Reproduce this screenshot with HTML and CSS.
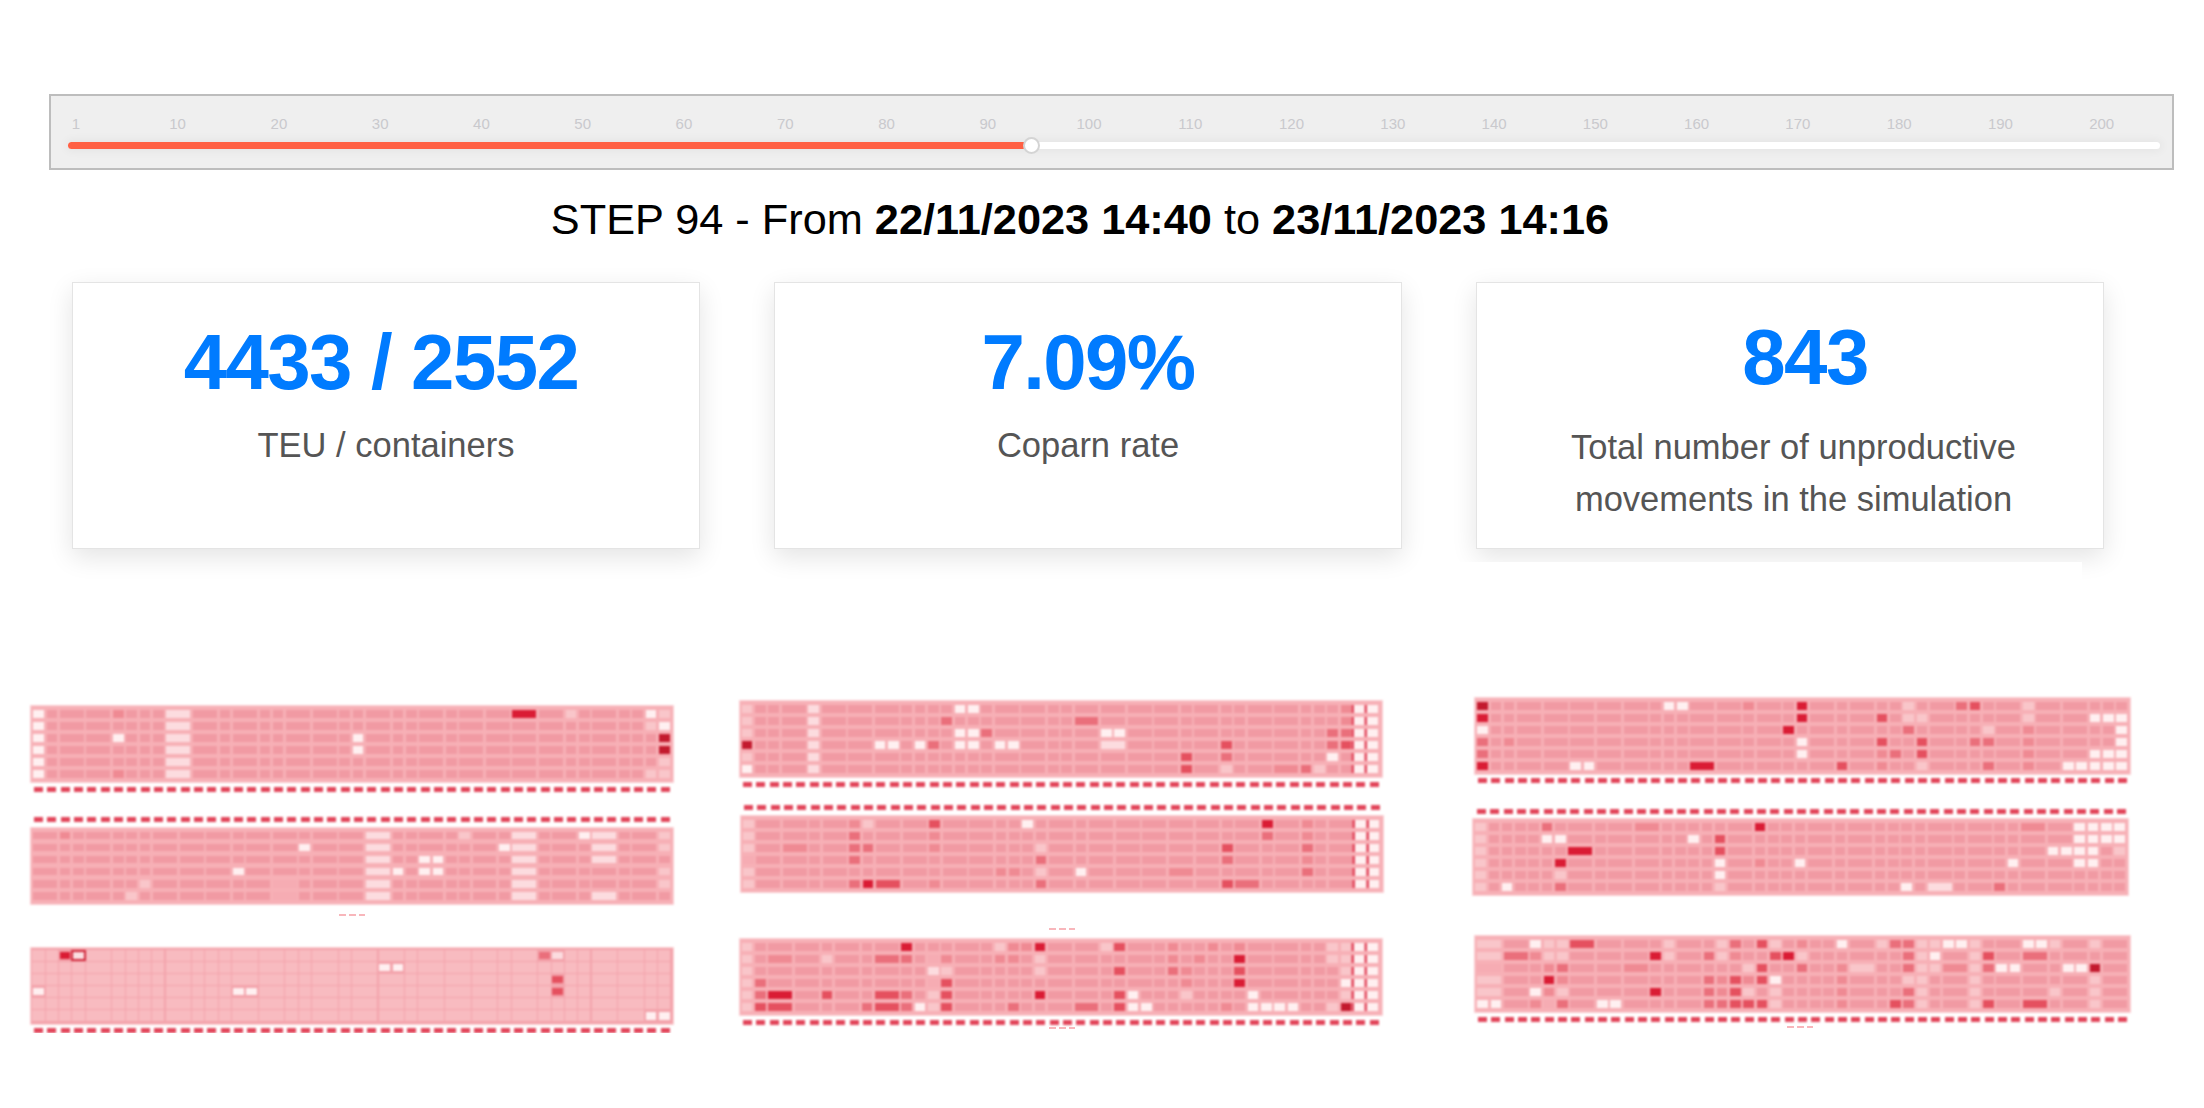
FILE: index.html
```html
<!DOCTYPE html>
<html>
<head>
    <title>Yard simulation</title>
    <meta charset="utf-8">
    <link rel="stylesheet" href="styles.css">
</head>

<body>
    <div class="slider">
        <div class="ticks">
            <span class="tick tick-first">1</span>
            <span class="tick">10</span><span class="tick">20</span><span class="tick">30</span><span class="tick">40</span>
            <span class="tick">50</span><span class="tick">60</span><span class="tick">70</span><span class="tick">80</span>
            <span class="tick">90</span><span class="tick">100</span><span class="tick">110</span><span class="tick">120</span>
            <span class="tick">130</span><span class="tick">140</span><span class="tick">150</span><span class="tick">160</span>
            <span class="tick">170</span><span class="tick">180</span><span class="tick">190</span><span class="tick">200</span>
        </div>
        <div class="track">
            <div class="track-fill"></div>
            <div class="thumb"></div>
        </div>
    </div>

    <h1 class="step">STEP 94 - From <b>22/11/2023 14:40</b> to <b>23/11/2023 14:16</b></h1>

    <div class="cards">
        <div class="card">
            <div class="card-value value-left">4433 / 2552</div>
            <div class="card-label">TEU / containers</div>
        </div>
        <div class="card">
            <div class="card-value">7.09%</div>
            <div class="card-label">Coparn rate</div>
        </div>
        <div class="card card-tall">
            <div class="card-value value-right">843</div>
            <div class="card-label">Total number of unproductive<br>movements in the simulation</div>
            <div class="card-patch"></div>
        </div>
    </div>

    <div class="yards">
        <div class="yard yard-1">
            <div class="map m1a" data-map="1a"></div>
            <div class="strip s1"></div>
            <div class="strip s2"></div>
            <div class="map m1b" data-map="1b"></div>
            <div class="speck sp1"></div>
            <div class="map m1c map-pale" data-map="1c"></div>
            <div class="strip s1"></div>
        </div>
        <div class="yard yard-2">
            <div class="map m2a" data-map="2a"></div>
            <div class="strip s1"></div>
            <div class="strip s3"></div>
            <div class="map m2b" data-map="2b"></div>
            <div class="speck sp2"></div>
            <div class="map m2c" data-map="2c"></div>
            <div class="strip s1"></div>
            <div class="speck sp3"></div>
        </div>
        <div class="yard yard-3">
            <div class="map map-wide m3a" data-map="3a"></div>
            <div class="strip strip-wide s4"></div>
            <div class="strip strip-wide s5"></div>
            <div class="map map-wide m3b" data-map="3b"></div>
            <div class="map map-wide m3c" data-map="3c"></div>
            <div class="strip strip-wide s1"></div>
            <div class="speck sp4"></div>
        </div>
    </div>

    <script src="maps.js"></script>
</body>

</html>
```

FILE: styles.css
```css
body {
    margin: 0;
    padding: 94px 0 0 49px;
    font-family: "Liberation Sans", Arial, sans-serif;
    background-color: #fff;
    overflow: hidden;
}

/* slider */
.slider {
    width: 2121px;
    height: 72px;
    border: 2px solid #bdbdbd;
    background-color: #efefef;
}

.ticks {
    display: flex;
    padding-top: 19px;
    height: 18px;
}

.tick {
    width: 101.27px;
    flex: none;
    text-align: center;
    font-size: 15px;
    line-height: 18px;
    color: #c9c9cd;
}

.tick-first {
    width: 50px;
    margin-right: 26px;
}

.track {
    position: relative;
    margin: 9px 0 0 17px;
    width: 2092px;
    height: 7px;
    border-radius: 4px;
    background-color: #fff;
    box-shadow: 0 0 8px 3px rgba(0, 0, 0, 0.04);
}

.track-fill {
    width: 963px;
    height: 7px;
    border-radius: 4px 0 0 4px;
    background-color: #ff6044;
}

.thumb {
    position: absolute;
    left: 955px;
    top: -5px;
    width: 13px;
    height: 13px;
    border: 2px solid #d4d4d4;
    border-radius: 50%;
    background-color: #fff;
}

/* title */
.step {
    margin: 24px 0 0 0;
    width: 2062px;
    text-align: center;
    font-size: 43.3px;
    line-height: 50px;
    font-weight: normal;
    color: #000;
}

.step b {
    font-weight: bold;
}

/* kpi cards */
.cards {
    display: flex;
    gap: 74px;
    margin: 38px 0 0 23px;
}

.card {
    position: relative;
    box-sizing: border-box;
    width: 628px;
    height: 267px;
    padding-top: 37px;
    text-align: center;
    background-color: #fff;
    border: 1px solid #e4e4e4;
    box-shadow: 0 8px 24px rgba(0, 0, 0, 0.11);
}

.card-value {
    font-size: 78px;
    line-height: 84px;
    font-weight: bold;
    letter-spacing: -1.6px;
    color: #007bff;
}

.value-left {
    padding-right: 10px;
}

.value-right {
    padding-left: 30px;
}

.card-label {
    margin-top: 14.5px;
    font-size: 34.5px;
    line-height: 52px;
    color: #555;
}

.card-tall {
    padding-top: 32px;
}

.card-tall .card-label {
    margin-top: 22px;
    padding-left: 7px;
}

.card-patch {
    position: absolute;
    left: -50px;
    top: 279px;
    width: 655px;
    height: 30px;
    background-color: #fff;
}

/* yard maps */
.yards {
    display: flex;
    margin: 141px 0 0 -18px;
}

.yard {
    flex: none;
    display: flex;
    flex-direction: column;
    width: 642px;
}

.yard-2 {
    margin-left: 66.5px;
}

.yard-3 {
    margin-left: 93.5px;
    width: 655px;
}

.map {
    box-sizing: border-box;
    display: grid;
    grid-template-columns: repeat(48, 10.67px);
    grid-template-rows: repeat(6, 7.7px);
    gap: 4.4px 2.67px;
    width: 642px;
    height: 76px;
    padding: 4px 0 0 2.2px;
    background-color: #f7b0b6;
    outline: 1px solid #fbd3d6;
    filter: blur(1px);
}

.map-wide {
    grid-template-columns: repeat(49, 10.67px);
    width: 655px;
}

.map-pale {
    background-color: #f3a3ab;
}

.cell {
    background-color: #f19aa3;
}

.cell-pair {
    grid-column: span 2;
}

.map-pale .cell-n {
    margin: -1.5px -0.8px;
    background-color: #f8bbc0;
}

.cell-l { background-color: #f6acb3; }
.cell-p { background-color: #f9c6ca; }
.cell-v { background-color: #fcdcdf; }
.cell-w { background-color: #fff0f1; }
.cell-m { background-color: #ef8a93; }
.cell-x { background-color: #ea6f7b; }
.cell-r { background-color: #e5505f; }
.cell-d { background-color: #da1c34; }
.cell-D { background-color: #c31a2e; }

.cell-k {
    background-color: #fff0f1;
    box-shadow: -2.5px 0 0 #e2455a;
}

.cell-o {
    background-color: #fbdfe1;
    box-shadow: 0 0 0 2px #cf2438;
}

.strip {
    flex: none;
    width: 640px;
    height: 5px;
    background: repeating-linear-gradient(90deg, #e2455a 0, #e2455a 9px, transparent 9px, transparent 13.33px);
    filter: blur(0.9px);
}

.strip-wide {
    width: 653px;
}

.speck {
    flex: none;
    width: 26px;
    height: 2px;
    background: repeating-linear-gradient(90deg, #f8b6bb 0, #f8b6bb 7px, transparent 7px, transparent 10px);
}

.m1a { margin-top: 16px; }
.m1b { margin-top: 5.5px; }
.m1c { margin-top: 32px; }
.m2a { margin-top: 11px; }
.m2b { margin: 6px 0 0 1.2px; }
.m2c { margin-top: 9px; }
.m3a { margin-top: 8px; }
.m3b { margin: 5.5px 0 0 -2px; }
.m3c { margin-top: 41px; }

.s1 { margin: 4.5px 0 0 3px; }
.s2 { margin: 25.5px 0 0 3px; }
.s3 { margin: 18.5px 0 0 4.5px; }
.s4 { margin: 3.5px 0 0 3px; }
.s5 { margin: 26px 0 0 1.5px; }

.sp1 { margin: 10px 0 0 308px; }
.sp2 { margin: 36px 0 0 309px; }
.sp3 { margin: 2.5px 0 0 309px; }
.sp4 { margin: 4.5px 0 0 312px; }
```

FILE: maps.js
```js
// r = rows, c = column: "w012345:5" paints column 5 white on every row
var MAPS = {
    '1a': {
        cols: 48,
        pairs: [2, 4, 10, 12, 15, 19, 21, 25, 29, 32, 34, 36, 38, 42],
        marks: 'w012345:0 m05:6 w2:6 v012345:10 w23:24 d0:36 p0:40 w0:46 p15:46 p045:47 w1:47 D23:47'
    },
    '1b': {
        cols: 48,
        pairs: [0, 4, 9, 11, 13, 16, 18, 21, 23, 25, 29, 33, 36, 39, 42, 45],
        marks: 'm0:2 v012345:25 v012345:36 w1:20 w1:35 w0:41 v0125:42 p0:32 w23:29 w23:30 w3:27 w3:15 p4:8 p5:7 p0134:47 l45:18'
    },
    '1c': {
        cols: 48,
        pairs: [4, 10, 15, 17, 21, 24, 26, 29, 31, 33, 36, 42, 44],
        marks: 'd0:2 o0:3 x0:38 v0:39 w1:26 w1:27 r23:39 w3:0 w3:15 w3:16 w5:46 w5:47'
    },
    '2a': {
        cols: 48,
        pairs: [3, 6, 8, 10, 19, 21, 25, 27, 29, 31, 34, 38, 40],
        marks: 'p0124:0 D3:0 w5:0 v012345:5 w0:16 w0:17 x1:15 x1:25 x2:18 w23:16 w23:17 w2:27 w2:28 v3:27 w3:10 w3:11 w3:13 x3:14 w3:19 w3:20 ' +
            'r3:36 x4:36 p5:36 r45:33 w4:44 m5:40 x5:42 p5:43 x23:44 m01:45 x2:45 r3:45 k012345:46 k012345:47'
    },
    '2b': {
        cols: 48,
        pairs: [1, 3, 6, 10, 12, 15, 17, 23, 26, 28, 30, 32, 34, 37, 40, 44],
        marks: 'p01245:0 l3:0 m0:8 x123:8 x5:8 x2:9 d5:9 p0:9 m2:3 r5:10 r0:14 m12:14 m5:14 w0:21 p24:22 x35:22 w4:25 m4:19 m4:20 ' +
            'r25:36 x3:36 x5:37 d0:39 x1:39 m013:42 x24:42 m4:32 k012345:46 k012345:47'
    },
    '2c': {
        cols: 48,
        pairs: [2, 4, 7, 10, 16, 23, 25, 29, 38, 40],
        marks: 'p012345:0 x34:1 r5:1 m1:2 d4:2 r5:2 p1:6 r4:6 x5:9 x1:10 r45:10 d0:12 x145:12 w5:13 v2:14 l13:14 p45:14 ' +
            'm1:15 p2:15 r345:15 p0:19 m1:19 m01:20 x5:20 m0:21 d04:22 p12:22 x5:25 p0:27 r0245:28 w45:29 n4:30 w5:30 ' +
            'm01:32 x2:32 m23:33 p4:33 m1:34 m0:35 m0:37 d13:37 r2:37 m5:36 w4:38 n4:39 w5:38 w5:39 w5:40 w5:41 ' +
            'p015:44 p0124:45 w3:45 D5:45 k012345:46 k012345:47'
    },
    '3a': {
        cols: 49,
        pairs: [3, 5, 7, 9, 11, 16, 18, 21, 25, 28, 34, 39, 42, 44],
        marks: 'D0:0 d15:0 w2:0 x34:0 m3:2 w0:14 w0:15 m0:20 d2:23 d01:24 w34:24 w5:7 w5:8 d5:16 r5:27 r13:30 m45:30 x4:31 ' +
            'p01:32 x2:32 p15:33 r34:33 x0:36 r0:37 x3:37 p2:38 x35:38 p01:41 m2345:41 w5:44 w5:45 w145:46 w145:47 w12345:48'
    },
    '3b': {
        cols: 49,
        pairs: [7, 10, 12, 19, 25, 28, 34, 37, 41, 43],
        marks: 'p012345:0 x0:5 w1:5 w1:6 d3:6 p4:6 x5:6 w5:2 d2:7 m0:12 w1:16 r12:18 w34:18 p5:18 d0:21 m3:21 w3:24 w5:32 v5:34 ' +
            'x5:39 w3:40 m0:41 w01:45 w01:46 w01:47 w01:48 w2:43 w2:44 w23:45 w23:46 p2:47 p2:48 n2:47'
    },
    '3c': {
        cols: 49,
        pairs: [0, 2, 7, 9, 11, 15, 28, 35, 39, 41, 44, 47],
        marks: 'p0134:0 l2:0 w5:0 w5:1 x1:2 w04:4 m1:4 m5:4 p01:5 m2:5 d3:5 m4:5 l5:5 p014:6 x25:6 m3:6 r0:7 w5:9 w5:10 m2:11 d14:13 p01:14 ' +
            'x1:17 x345:17 p01:18 m3:18 m4:18 x5:18 x0:19 m1:19 r345:19 p24:20 m3:20 r5:20 r0235:21 p0:22 r1:22 w3:22 p45:22 d1:23 m0:24 p1:24 x2:24 ' +
            'w0:27 m2345:27 p2:28 p0:30 x0:31 r5:31 x01245:32 p3:32 p012345:33 p02:34 w1:34 w0:35 w0:36 m2:35 p012345:37 r15:38 x2:38 ' +
            'w2:39 w2:40 w0:41 w0:42 x1:41 r5:41 p04:43 w2:44 w2:45 D2:46 p0345:46'
    }
};

function buildMap(el, map) {
    var marks = {};
    map.marks.split(' ').forEach(function (token) {
        if (!token) return;
        var parts = token.match(/^([a-zA-Z])(\d+):(\d+)$/);
        parts[2].split('').forEach(function (row) {
            marks[row + ':' + parts[3]] = parts[1];
        });
    });

    for (var r = 0; r < 6; r++) {
        for (var c = 0; c < map.cols; c++) {
            var first = marks[r + ':' + c];
            var cell = document.createElement('div');
            var level = first || 'n';

            if (map.pairs.indexOf(c) !== -1) {
                var second = marks[r + ':' + (c + 1)];
                if (!(first && second)) {
                    // pair stays merged unless both halves were painted
                    level = first || second || 'n';
                    cell.className = 'cell cell-pair cell-' + level;
                    el.appendChild(cell);
                    c++;
                    continue;
                }
            }
            cell.className = 'cell cell-' + level;
            el.appendChild(cell);
        }
    }
}

document.querySelectorAll('.map').forEach(function (el) {
    buildMap(el, MAPS[el.getAttribute('data-map')]);
});
```
